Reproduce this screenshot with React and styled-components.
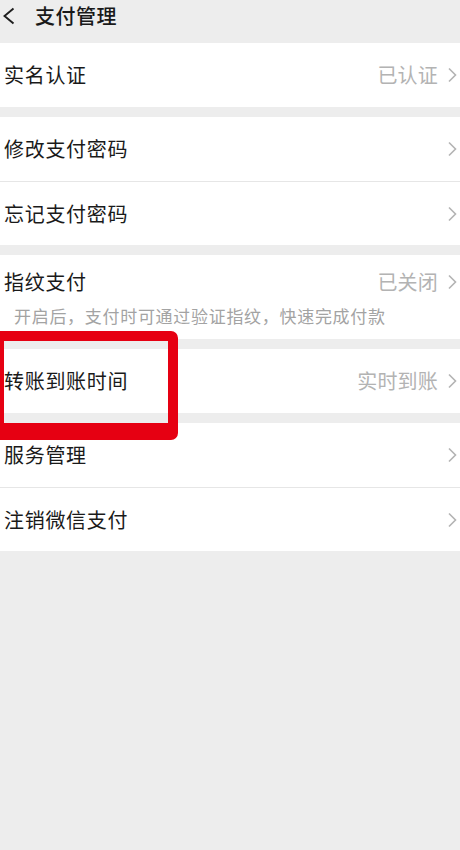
import React from 'react';
import styled, { createGlobalStyle } from 'styled-components';

const Global = createGlobalStyle`
  html, body {
    margin: 0;
    padding: 0;
    background: #ededed;
  }
  body {
    font-family: "Noto Sans CJK SC", "Noto Sans", sans-serif;
    color: #1a1a1a;
  }
`;

const Page = styled.div`
  position: relative;
  width: 460px;
  min-height: 850px;
  background: #ededed;
  overflow: hidden;
`;

const Header = styled.div`
  height: 43px;
  display: flex;
  align-items: flex-start;
  padding-top: 4px;
  box-sizing: border-box;
`;

const Back = styled.div`
  width: 35px;
  height: 24px;
  display: flex;
  align-items: center;
  padding-left: 2px;
  box-sizing: border-box;
`;

const Title = styled.div`
  font-size: 20px;
  line-height: 24px;
  font-weight: 500;
  letter-spacing: 0.5px;
  color: #191919;
`;

const Group = styled.div`
  background: #fff;
  margin-bottom: 10px;
`;

const Row = styled.div`
  height: ${p => (p.$short ? 54 : 64)}px;
  display: flex;
  align-items: center;
  padding: 0 2px 0 4px;
  box-sizing: border-box;
  border-top: ${p => (p.$divider ? '1px solid #e6e6e6' : 'none')};
`;

const Label = styled.div`
  flex: 1;
  font-size: 20px;
  line-height: 24px;
  letter-spacing: 0.7px;
  color: #1a1a1a;
`;

const Value = styled.div`
  font-size: 20px;
  line-height: 24px;
  letter-spacing: 0.2px;
  color: #b3b3b3;
  margin-right: 9px;
`;

const Hint = styled.div`
  padding: 0 0 13px 14px;
  margin-top: -4px;
  font-size: 17px;
  line-height: 21px;
  letter-spacing: 0.7px;
  color: #a3a3a3;
`;

const Mark = styled.div`
  position: absolute;
  left: -6px;
  top: 331px;
  width: 184px;
  height: 109px;
  box-sizing: border-box;
  border: 10px solid #e60012;
  border-bottom-width: 17px;
  border-radius: 7px;
  pointer-events: none;
`;

const Chevron = () => (
  <svg width="11" height="16" viewBox="0 0 11 16">
    <path d="M2 1.5 L8.5 8 L2 14.5" fill="none" stroke="#b3b3b3" strokeWidth="1.6" />
  </svg>
);

const BackArrow = () => (
  <svg width="13" height="18" viewBox="0 0 13 18">
    <path d="M11.5 1.5 L2.5 9 L11.5 16.5" fill="none" stroke="#1e1e1e" strokeWidth="1.9" />
  </svg>
);

function Item({ label, value, divider }) {
  return (
    <Row $divider={divider}>
      <Label>{label}</Label>
      {value && <Value>{value}</Value>}
      <Chevron />
    </Row>
  );
}

export default function App() {
  return (
    <Page>
      <Global />
      <Header>
        <Back>
          <BackArrow />
        </Back>
        <Title>支付管理</Title>
      </Header>

      <Group>
        <Item label="实名认证" value="已认证" />
      </Group>

      <Group>
        <Item label="修改支付密码" />
        <Item label="忘记支付密码" divider />
      </Group>

      <Group>
        <Row $short>
          <Label>指纹支付</Label>
          <Value>已关闭</Value>
          <Chevron />
        </Row>
        <Hint>开启后，支付时可通过验证指纹，快速完成付款</Hint>
      </Group>

      <Group>
        <Item label="转账到账时间" value="实时到账" />
      </Group>

      <Group>
        <Item label="服务管理" />
        <Item label="注销微信支付" divider />
      </Group>

      <Mark />
    </Page>
  );
}
